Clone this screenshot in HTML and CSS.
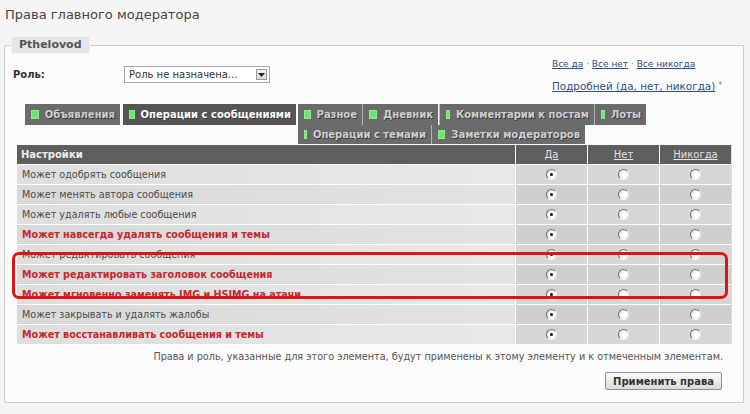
FILE: index.html
```html
<!DOCTYPE html>
<html lang="ru">
<head>
<meta charset="utf-8">
<title>Права главного модератора</title>
<link rel="stylesheet" href="styles.css">
</head>
<body>
<h1 class="title">Права главного модератора</h1>
<fieldset class="panel">
  <legend class="panel-legend">Pthelovod</legend>
  <div class="top">
    <div class="role">
      <span class="role-label">Роль:</span>
      <div class="select">
        <span class="select-text">Роль не назначена...</span>
        <span class="select-btn"><svg width="7" height="4" viewBox="0 0 7 4"><path d="M0 0h7L3.5 4z" fill="#222"/></svg></span>
      </div>
    </div>
    <div class="quick">
      <div class="quick-all"><a href="#">Все да</a> · <a href="#">Все нет</a> · <a href="#">Все никогда</a></div>
      <div class="quick-more"><a href="#">Подробней (да, нет, никогда)</a><span class="star">*</span></div>
    </div>
  </div>

  <div class="tabs">
    <div class="tab-row">
      <span class="tab t-ads"><i class="dot"></i>Объявления</span>
      <span class="tab tab-active t-posts"><i class="dot"></i>Операции с сообщениями</span>
      <span class="tab t-misc"><i class="dot"></i>Разное</span>
      <span class="tab t-diary"><i class="dot"></i>Дневник</span>
      <span class="tab t-comm"><i class="dot"></i>Комментарии к постам</span>
      <span class="tab t-lots"><i class="dot"></i>Лоты</span>
    </div>
    <div class="tab-row tab-row-2">
      <span class="tab t-topics"><i class="dot"></i>Операции с темами</span>
      <span class="tab t-notes"><i class="dot"></i>Заметки модераторов</span>
    </div>
  </div>

  <div class="grid">
    <div class="hcell hname">Настройки</div>
    <div class="hcell hopt"><a href="#">Да</a></div>
    <div class="hcell hopt"><a href="#">Нет</a></div>
    <div class="hcell hopt"><a href="#">Никогда</a></div>

    <div class="cell name">Может одобрять сообщения</div>
    <div class="cell opt"><span class="radio on"></span></div>
    <div class="cell opt"><span class="radio"></span></div>
    <div class="cell opt"><span class="radio"></span></div>

    <div class="cell name alt">Может менять автора сообщения</div>
    <div class="cell opt alt"><span class="radio on"></span></div>
    <div class="cell opt alt"><span class="radio"></span></div>
    <div class="cell opt alt"><span class="radio"></span></div>

    <div class="cell name">Может удалять любые сообщения</div>
    <div class="cell opt"><span class="radio on"></span></div>
    <div class="cell opt"><span class="radio"></span></div>
    <div class="cell opt"><span class="radio"></span></div>

    <div class="cell name alt danger">Может навсегда удалять сообщения и темы</div>
    <div class="cell opt alt"><span class="radio on"></span></div>
    <div class="cell opt alt"><span class="radio"></span></div>
    <div class="cell opt alt"><span class="radio"></span></div>

    <div class="cell name">Может редактировать сообщения</div>
    <div class="cell opt"><span class="radio on"></span></div>
    <div class="cell opt"><span class="radio"></span></div>
    <div class="cell opt"><span class="radio"></span></div>

    <div class="cell name alt danger">Может редактировать заголовок сообщения</div>
    <div class="cell opt alt"><span class="radio on"></span></div>
    <div class="cell opt alt"><span class="radio"></span></div>
    <div class="cell opt alt"><span class="radio"></span></div>

    <div class="cell name danger">Может мгновенно заменять IMG и HSIMG на атачи</div>
    <div class="cell opt"><span class="radio on"></span></div>
    <div class="cell opt"><span class="radio"></span></div>
    <div class="cell opt"><span class="radio"></span></div>

    <div class="cell name alt">Может закрывать и удалять жалобы</div>
    <div class="cell opt alt"><span class="radio on"></span></div>
    <div class="cell opt alt"><span class="radio"></span></div>
    <div class="cell opt alt"><span class="radio"></span></div>

    <div class="cell name danger">Может восстанавливать сообщения и темы</div>
    <div class="cell opt"><span class="radio on"></span></div>
    <div class="cell opt"><span class="radio"></span></div>
    <div class="cell opt"><span class="radio"></span></div>
  </div>

  <p class="note">Права и роль, указанные для этого элемента, будут применены к этому элементу и к отмеченным элементам.</p>
  <div class="actions"><button class="apply" type="button">Применить права</button></div>
</fieldset>
<div class="highlight"></div>
</body>
</html>
```

FILE: styles.css
```css
html, body {
  margin: 0;
  padding: 0;
}
body {
  position: relative;
  width: 750px;
  height: 414px;
  overflow: hidden;
  background: #f5f5f5;
  font-family: "DejaVu Sans", Verdana, sans-serif;
  color: #444;
}
a { color: #2f4f7f; }

.title {
  margin: 0;
  padding: 6px 0 0 5px;
  height: 36px;
  box-sizing: border-box;
  font-size: 13px;
  line-height: 18px;
  font-weight: normal;
  color: #444;
}

.panel {
  margin: 0 6px 0 4px;
  padding: 0 8px 12px 8px;
  border: 1px solid #cfcfcf;
  background: #fbfbfb;
  min-inline-size: 0;
}
.panel-legend {
  margin-left: -2px;
  padding: 0 7px;
  height: 16px;
  line-height: 16px;
  background: #e6e6e6;
  border: 1px solid #f4f4f4;
  font-size: 11px;
  font-weight: bold;
  color: #555;
}

.top {
  display: flex;
  align-items: flex-start;
  padding-top: 3px;
  height: 47px;
}
.role {
  flex: 0 0 539px;
  display: flex;
  align-items: center;
  margin-top: 9px;
}
.role-label {
  width: 111px;
  font-size: 10px;
  font-weight: bold;
  color: #333;
}
.select {
  display: flex;
  align-items: center;
  justify-content: space-between;
  width: 146px;
  height: 17px;
  box-sizing: border-box;
  border: 1px solid #a9a9a9;
  background: #fff;
  padding: 0 2px 0 4px;
}
.select-text {
  font-size: 10px;
  color: #333;
}
.select-btn {
  display: flex;
  align-items: center;
  justify-content: center;
  width: 11px;
  height: 11px;
  box-sizing: border-box;
  border: 1px solid #999;
  background: linear-gradient(#f4f4f4, #d8d8d8);
}

.quick {
  white-space: nowrap;
}
.quick-all {
  font-size: 9px;
  line-height: 14px;
  color: #777;
}
.quick-more {
  margin-top: 7px;
  font-size: 10.4px;
  line-height: 16px;
}
.star {
  font-size: 8px;
  color: #777;
  vertical-align: top;
  margin-left: 3px;
}

.tabs {
  padding-left: 12px;
}
.tab-row {
  display: flex;
  height: 21px;
}
.tab-row-2 {
  height: 19px;
  padding-left: 273px;
}
.tab {
  display: flex;
  align-items: center;
  box-sizing: border-box;
  padding: 0 5px 0 6px;
  background: #6b6b6b;
  color: #cfcfcf;
  font-size: 10px;
  font-weight: bold;
  white-space: nowrap;
  text-shadow: 1px 1px 0 #3a3a3a;
}
.dot {
  display: inline-block;
  width: 9px;
  height: 9px;
  box-sizing: border-box;
  margin-right: 6px;
  background: #6fe36f;
  border: 1px solid #8af08a;
}
.tab-active {
  background: #555;
  color: #fff;
}
.t-ads { width: 95px; margin-right: 3px; }
.t-posts { width: 173px; margin-right: 2px; }
.t-misc { width: 64px; margin-right: 1px; }
.t-diary { width: 75px; margin-right: 2px; }
.t-comm { width: 154px; margin-right: 1px; }
.t-lots { width: 51px; }
.t-topics { width: 133px; margin-right: 1px; }
.t-notes { width: 153px; }
.t-misc + .tab, .t-diary + .tab, .t-comm + .tab, .t-topics + .tab { box-shadow: -1px 0 0 #b5b5b5; }

.grid {
  display: grid;
  grid-template-columns: 1fr 71px 71px 71px;
  gap: 1px;
  margin: 1px 3px 0 4px;
  background: #fff;
  border-right: 1px solid #ddd;
}
.hcell {
  height: 19px;
  display: flex;
  align-items: center;
  background: #5e5e5e;
  font-size: 10px;
  font-weight: bold;
  color: #eee;
}
.hname { padding-left: 4px; }
.hopt { justify-content: center; }
.hopt a { color: #e2e2e2; font-weight: normal; font-size: 10px; }

.cell {
  height: 19px;
  display: flex;
  align-items: center;
  font-size: 9.6px;
}
.name {
  padding-left: 5px;
  color: #4a4a4a;
  background: linear-gradient(to right, #dedede, #e8e8e8);
}
.name.alt { background: linear-gradient(to right, #d9d9d9, #e2e2e2); }
.opt {
  justify-content: center;
  background: #d6d6d6;
}
.opt.alt { background: #cfcfcf; }
.danger {
  color: #c8262c;
  font-weight: bold;
  font-size: 9.6px;
}

.radio {
  position: relative;
  width: 11px;
  height: 11px;
  box-sizing: border-box;
  border-radius: 50%;
  border: 1px solid;
  border-color: #6e6e6e #e9e9e9 #f4f4f4 #6e6e6e;
  background: radial-gradient(circle at 65% 65%, #fff 0, #fafafa 45%, #dcdcdc 100%);
}
.radio.on::after {
  content: "";
  position: absolute;
  left: 3px;
  top: 3px;
  width: 3px;
  height: 3px;
  border-radius: 50%;
  background: #111;
}

.note {
  margin: 7px 12px 0 0;
  text-align: right;
  font-size: 9.66px;
  line-height: 12px;
  color: #555;
}
.actions {
  display: flex;
  justify-content: flex-end;
  margin: 9px 13px 0 0;
}
.apply {
  height: 18px;
  padding: 0 7px;
  border: 1px solid #8e8e8e;
  border-radius: 2px;
  background: linear-gradient(#fbfbfb, #dadada);
  font-family: "DejaVu Sans", Verdana, sans-serif;
  font-size: 10px;
  font-weight: bold;
  color: #333;
}

.highlight {
  position: absolute;
  left: 12px;
  top: 252px;
  width: 716px;
  height: 47px;
  box-sizing: border-box;
  border: 3px solid #e01414;
  border-radius: 7px;
  pointer-events: none;
}
```
